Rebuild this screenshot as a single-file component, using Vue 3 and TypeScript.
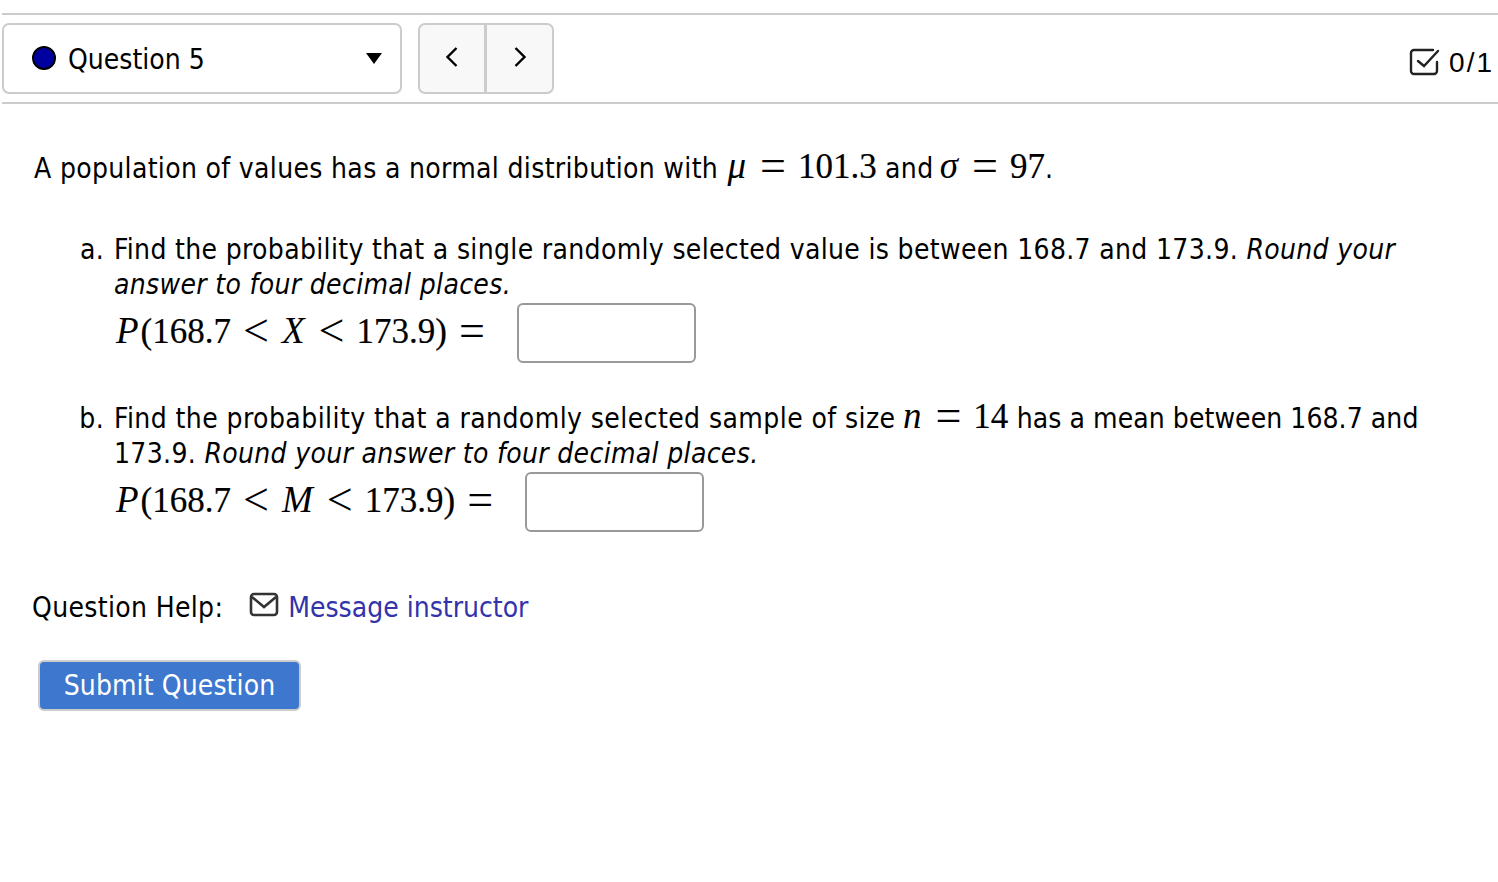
<script setup lang="ts">
const title = 'Question 5'
</script>

<template>
  <div class="page">
    <header class="bar">
      <div class="select">
        <span class="dot"></span>
        <span class="select-label">{{ title }}</span>
        <span class="caret"></span>
      </div>
      <div class="nav">
        <button class="nav-btn">
          <svg width="16" height="24" viewBox="0 0 16 24"><path d="M12.5 3 3.5 12l9 9" fill="none" stroke="#000" stroke-width="2.4"/></svg>
        </button>
        <button class="nav-btn second">
          <svg width="16" height="24" viewBox="0 0 16 24"><path d="M3.5 3l9 9-9 9" fill="none" stroke="#000" stroke-width="2.4"/></svg>
        </button>
      </div>
      <div class="score">
        <svg width="32" height="30" viewBox="0 0 32 30"><path d="M28 14v9a3 3 0 0 1-3 3H5a3 3 0 0 1-3-3V5a3 3 0 0 1 3-3h19" fill="none" stroke="#222" stroke-width="2.4" stroke-linecap="round"/><path d="M9 13l6 5L29 3" fill="none" stroke="#222" stroke-width="2.4" stroke-linecap="round"/></svg>
        <span>0/1</span>
      </div>
    </header>

    <main class="body">
      <p class="intro">A population of values has a normal distribution with <span class="math"><i class="var">μ</i><span class="rel">=</span>101.3</span> and <span class="math tight"><i class="var">σ</i><span class="rel">=</span>97</span>.</p>

      <div class="part first">
        <span class="marker">a.</span>
        <div class="part-body">
          <div class="lines">Find the probability that a single randomly selected value is between 168.7 and 173.9. <i>Round your answer to four decimal places.</i></div>
          <div class="answer">
            <span class="math raised"><i class="var">P</i>(168.7<span class="rel">&lt;</span><i class="var">X</i><span class="rel">&lt;</span>173.9)<span class="rel">=</span></span>
            <input class="box" type="text" />
          </div>
        </div>
      </div>

      <div class="part second-part">
        <span class="marker">b.</span>
        <div class="part-body">
          <div class="lines"><span class="loose">Find the probability that a randomly selected sample of size</span> <span class="math inline-n"><i class="var">n</i><span class="rel">=</span>14</span> <span class="snug">has a mean between 168.7 and</span> 173.9. <i>Round your answer to four decimal places.</i></div>
          <div class="answer">
            <span class="math raised"><i class="var">P</i>(168.7<span class="rel">&lt;</span><i class="var">M</i><span class="rel">&lt;</span>173.9)<span class="rel">=</span></span>
            <input class="box" type="text" />
          </div>
        </div>
      </div>

      <div class="help">
        <span class="help-label">Question Help:</span>
        <svg class="mail" width="30" height="26" viewBox="0 0 30 26"><rect x="2" y="2" width="26" height="21" rx="3" fill="none" stroke="#333" stroke-width="2.6"/><path d="M3 5l12 10L27 5" fill="none" stroke="#333" stroke-width="2.6"/></svg>
        <a class="link">Message instructor</a>
      </div>

      <button class="submit">Submit Question</button>
    </main>
  </div>
</template>

<style>
html, body { margin: 0; background: #fff; }
</style>

<style scoped>
.page {
  width: 1498px;
  height: 882px;
  box-sizing: border-box;
  padding: 13px 0 0 2px;
  font-family: "DejaVu Sans Condensed", "DejaVu Sans", sans-serif;
  font-stretch: condensed;
  font-size: 28px;
  color: #000;
  overflow: hidden;
}
.bar {
  display: flex;
  align-items: flex-start;
  height: 91px;
  padding-top: 8px;
  box-sizing: border-box;
  border-top: 2px solid #ccc;
  border-bottom: 2px solid #ccc;
}
.select {
  width: 400px;
  height: 71px;
  box-sizing: border-box;
  border: 2px solid #ccc;
  border-radius: 7px;
  display: flex;
  align-items: center;
  padding: 0 18px 0 28px;
}
.dot {
  width: 24px;
  height: 24px;
  box-sizing: border-box;
  border-radius: 50%;
  background: #0000a0;
  border: 2px solid #000;
  margin-right: 12px;
  margin-top: -2px;
}
.select-label { flex: 1; padding-top: 2px; }
.caret {
  width: 0;
  height: 0;
  border-left: 8px solid transparent;
  border-right: 8px solid transparent;
  border-top: 11px solid #000;
}
.nav { display: flex; margin-left: 16px; height: 71px; }
.nav-btn {
  width: 68px;
  height: 71px;
  padding: 0;
  box-sizing: border-box;
  background: #f8f8f8;
  border: 2px solid #ccc;
  border-radius: 7px 0 0 7px;
}
.nav-btn.second { border-left-width: 1px; border-radius: 0 7px 7px 0; }
.score {
  margin-left: auto;
  display: flex;
  align-items: center;
  gap: 9px;
  height: 79px;
  font-family: "Liberation Sans", sans-serif;
  font-size: 28px;
  letter-spacing: 2px;
  padding-right: 4px;
}
.score svg { margin-right: -1px; }
.body { padding: 45px 0 0 30px; }
.intro, .lines, .help-label, .marker { letter-spacing: 0.33px; }
.intro { margin: 0; height: 36px; line-height: 36px; padding-left: 2px; }
.math { font-family: "Liberation Serif", serif; font-size: 35px; letter-spacing: 0; -webkit-text-stroke: 0.2px #000; }
.raised { padding-bottom: 4px; }
.tight { margin-left: -3px; }
.inline-n { margin-left: -2px; }
.loose { letter-spacing: 0.42px; }
.snug { letter-spacing: 0.07px; }
.var { font-size: 37px; margin: 0 2px 0 1px; line-height: 0; -webkit-text-stroke: 0; }
.rel { font-size: 46px; margin: 0 12px; line-height: 0; vertical-align: -3px; -webkit-text-stroke: 0; }
.part { display: flex; align-items: baseline; line-height: 35px; }
.first { margin-top: 47px; }
.second-part { margin-top: 36px; }
.marker { width: 82px; text-align: right; flex: none; padding-right: 10px; box-sizing: border-box; }
.part-body { flex: 1; padding-right: 50px; }
.answer { display: flex; align-items: center; height: 60px; margin-top: 1px; padding-left: 1px; }
.box {
  width: 179px;
  height: 60px;
  box-sizing: border-box;
  margin-left: 20px;
  border: 2px solid #999;
  border-radius: 6px;
  background: #fff;
}
.help { display: flex; align-items: center; margin-top: 55px; height: 40px; }
.mail { margin: -4px 9px 0 26px; }
.link { color: #3333aa; }
.submit {
  display: block;
  margin: 33px 0 0 6px;
  width: 263px;
  height: 51px;
  box-sizing: border-box;
  background: #3d77ce;
  color: #fff;
  border: 2px solid #ccc;
  border-radius: 6px;
  font: inherit;
  font-stretch: condensed;
  letter-spacing: 0.1px;
  padding: 0;
}
</style>
